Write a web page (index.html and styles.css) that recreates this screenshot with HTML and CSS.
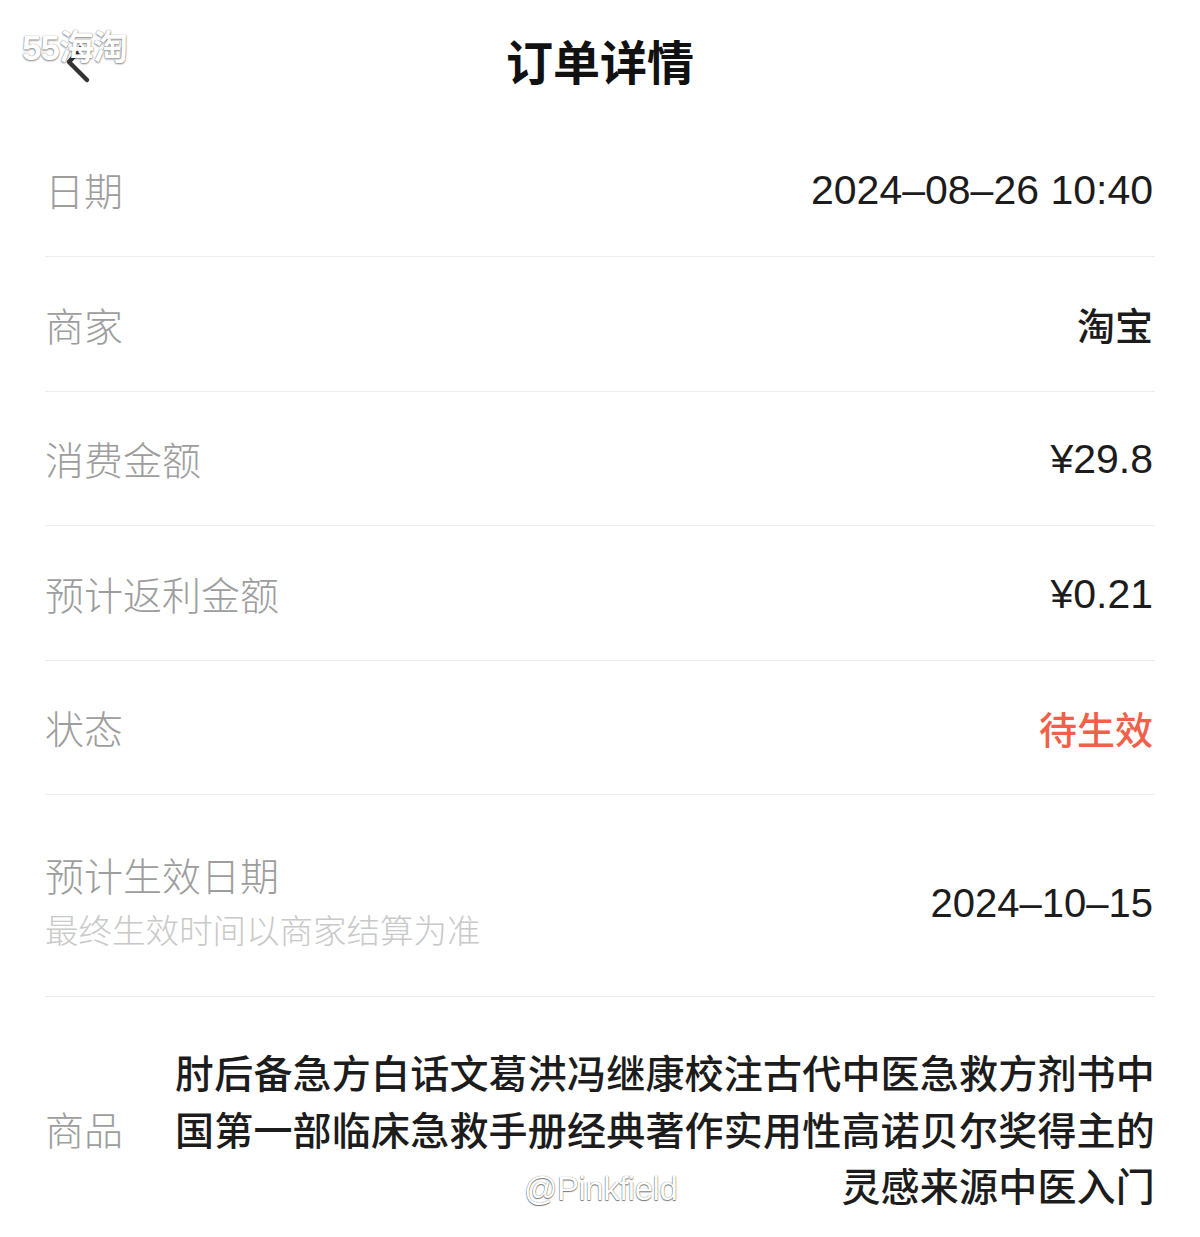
FILE: index.html
```html
<!DOCTYPE html>
<html lang="zh-CN">
<head>
    <meta charset="UTF-8">
    <meta name="viewport" content="width=device-width, initial-scale=1.0">
    <title>订单详情</title>
    <link rel="stylesheet" href="styles.css">
</head>
<body>

    <div class="page">
        <header class="nav">
            <button class="back" aria-label="返回">
                <svg width="40" height="50" viewBox="0 0 40 50">
                    <polyline points="19,8 7,22 25,40" fill="none" stroke="#333" stroke-width="4.5" stroke-linecap="round" stroke-linejoin="round"/>
                </svg>
            </button>
            <h1>订单详情</h1>
        </header>

        <section class="detail">
            <div class="row">
                <span class="label">日期</span>
                <span class="value num">2024–08–26 10:40</span>
            </div>
            <div class="row">
                <span class="label">商家</span>
                <span class="value">淘宝</span>
            </div>
            <div class="row">
                <span class="label">消费金额</span>
                <span class="value num">¥29.8</span>
            </div>
            <div class="row">
                <span class="label">预计返利金额</span>
                <span class="value num">¥0.21</span>
            </div>
            <div class="row">
                <span class="label">状态</span>
                <span class="value status">待生效</span>
            </div>
            <div class="row row-tall">
                <div class="label-group">
                    <span class="label">预计生效日期</span>
                    <span class="sub">最终生效时间以商家结算为准</span>
                </div>
                <span class="value num date-short">2024–10–15</span>
            </div>
            <div class="row row-goods">
                <span class="label">商品</span>
                <p class="goods">肘后备急方白话文葛洪冯继康校注古代中医急救方剂书中国第一部临床急救手册经典著作实用性高诺贝尔奖得主的灵感来源中医入门</p>
            </div>
        </section>
    </div>

    <!-- image watermarks -->
    <div class="mark mark-site">55海淘</div>
    <div class="mark mark-user">@Pinkfield</div>

</body>
</html>
```

FILE: styles.css
```css
/* Reset */
* {
    box-sizing: border-box;
    margin: 0;
    padding: 0;
}

body {
    font-family: "Liberation Sans", "Noto Sans CJK SC", sans-serif;
    background-color: #fff;
    color: #1c1c1c;
    height: 1237px;
    overflow: hidden;
}

.page {
    padding: 0 45px;
}

/* Nav bar */
.nav {
    height: 122.5px;
    display: flex;
    align-items: center;
    justify-content: center;
    position: relative;
}

.nav h1 {
    font-family: "Noto Sans CJK SC", sans-serif;
    font-size: 47px;
    font-weight: 700;
    color: #111;
    margin-top: -3px;
}

.back {
    position: absolute;
    left: 17px;
    top: 40px;
    background: none;
    border: none;
    width: 40px;
    height: 50px;
}

/* Rows */
.row {
    height: 134.5px;
    display: flex;
    align-items: center;
    justify-content: space-between;
    border-bottom: 1px solid #ececec;
}

.label {
    font-family: "Noto Sans CJK SC", sans-serif;
    font-size: 39px;
    font-weight: 300;
    color: #9d9d9d;
    line-height: 46px;
}

.value {
    font-family: "Noto Sans CJK SC", sans-serif;
    font-size: 38px;
    font-weight: 500;
    color: #1c1c1c;
    margin-right: 2px;
}

.value.num {
    font-family: "Liberation Sans", sans-serif;
    font-size: 41px;
    font-weight: 400;
    margin-top: 3px;
}

.value.date-short {
    font-size: 40px;
}

.status {
    color: #f2604a;
}

/* Effective date row */
.row-tall {
    height: 202px;
    padding-top: 12px;
}

.label-group {
    display: flex;
    flex-direction: column;
}

.sub {
    font-family: "Noto Sans CJK SC", sans-serif;
    font-size: 33.5px;
    font-weight: 300;
    color: #c9c9c9;
    line-height: 46px;
    margin-top: 9px;
}

/* Goods row */
.row-goods {
    height: auto;
    padding-top: 46px;
    border-bottom: none;
}

.goods {
    width: 980px;
    font-family: "Noto Sans CJK SC", sans-serif;
    font-size: 39px;
    font-weight: 500;
    letter-spacing: 0.2px;
    line-height: 56.5px;
    text-align: right;
    color: #1c1c1c;
}

/* Watermarks over the screenshot */
.mark {
    position: absolute;
    color: #fff;
    pointer-events: none;
}

.mark-site {
    left: 22px;
    top: 19px;
    font-family: "Liberation Sans", "Noto Sans CJK SC", sans-serif;
    font-size: 35px;
    font-weight: 700;
    letter-spacing: -1px;
    text-shadow: 0 1px 2px rgba(0, 0, 0, 0.45), 0 0 1px rgba(0, 0, 0, 0.5);
}

.mark-user {
    left: 524px;
    top: 1170px;
    font-family: "Liberation Sans", sans-serif;
    font-size: 33px;
    letter-spacing: -0.5px;
    text-shadow: 0 1px 1px rgba(0, 0, 0, 0.5), 0 0 1px rgba(0, 0, 0, 0.6);
}
```
